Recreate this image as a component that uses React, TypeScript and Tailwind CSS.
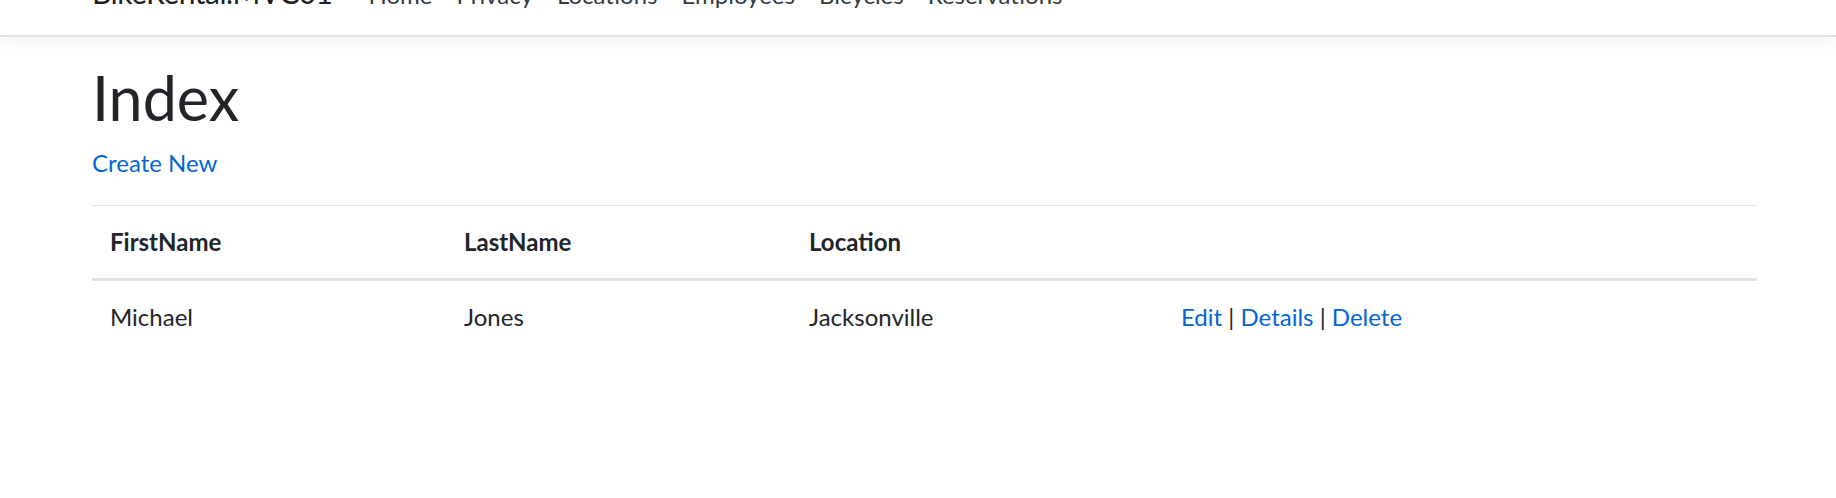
import React from "react";

export default function App() {
  return (
    <div
      className="min-h-[498px] bg-white text-[#212529]"
      style={{ fontFamily: 'Lato, "Open Sans", sans-serif' }}
    >
      <header className="flex flex-col border-b-2 border-[#dee2e6] bg-white shadow-[0_6px_18px_rgba(0,0,0,0.05)]">
        <div className="mx-[92px] -mt-[23px] pb-[25px] flex items-baseline">
          <a className="text-[30px] leading-[30px] tracking-[-0.5px] mr-[24px] text-[rgba(0,0,0,0.9)]">BikeRental.MVC01</a>
          <nav className="flex items-baseline text-[24px] leading-[30px] text-[#343a40]">
            <a className="px-[12px]">Home</a>
            <a className="px-[12px]">Privacy</a>
            <a className="px-[12px]">Locations</a>
            <a className="px-[12px]">Employees</a>
            <a className="px-[12px]">Bicycles</a>
            <a className="px-[12px]">Reservations</a>
          </nav>
        </div>
      </header>
      <main className="mx-[92px] mt-[24px] w-[1665px]">
        <h1 className="text-[61px] leading-[72px] pt-[1px] mb-[11px] font-normal">Index</h1>
        <p className="text-[24px] leading-[36px] mb-[24px]">
          <a className="text-[#0366d6]">Create New</a>
        </p>
        <table className="w-full border-collapse text-[24px] leading-[36px]">
          <thead>
            <tr>
              <th className="w-[354px] text-left font-bold px-[18px] py-[18px] border-t-[1.5px] border-b-[3px] border-[#dee2e6]">FirstName</th>
              <th className="w-[345px] text-left font-bold px-[18px] py-[18px] border-t-[1.5px] border-b-[3px] border-[#dee2e6]">LastName</th>
              <th className="w-[372px] text-left font-bold px-[18px] py-[18px] border-t-[1.5px] border-b-[3px] border-[#dee2e6]">Location</th>
              <th className="text-left px-[18px] py-[18px] border-t-[1.5px] border-b-[3px] border-[#dee2e6]"></th>
            </tr>
          </thead>
          <tbody>
            <tr>
              <td className="px-[18px] py-[18px]">Michael</td>
              <td className="px-[18px] py-[18px]">Jones</td>
              <td className="px-[18px] py-[18px]">Jacksonville</td>
              <td className="px-[18px] py-[18px]">
                <a className="text-[#0366d6]">Edit</a> | <a className="text-[#0366d6]">Details</a> |{" "}
                <a className="text-[#0366d6]">Delete</a>
              </td>
            </tr>
          </tbody>
        </table>
      </main>
    </div>
  );
}
